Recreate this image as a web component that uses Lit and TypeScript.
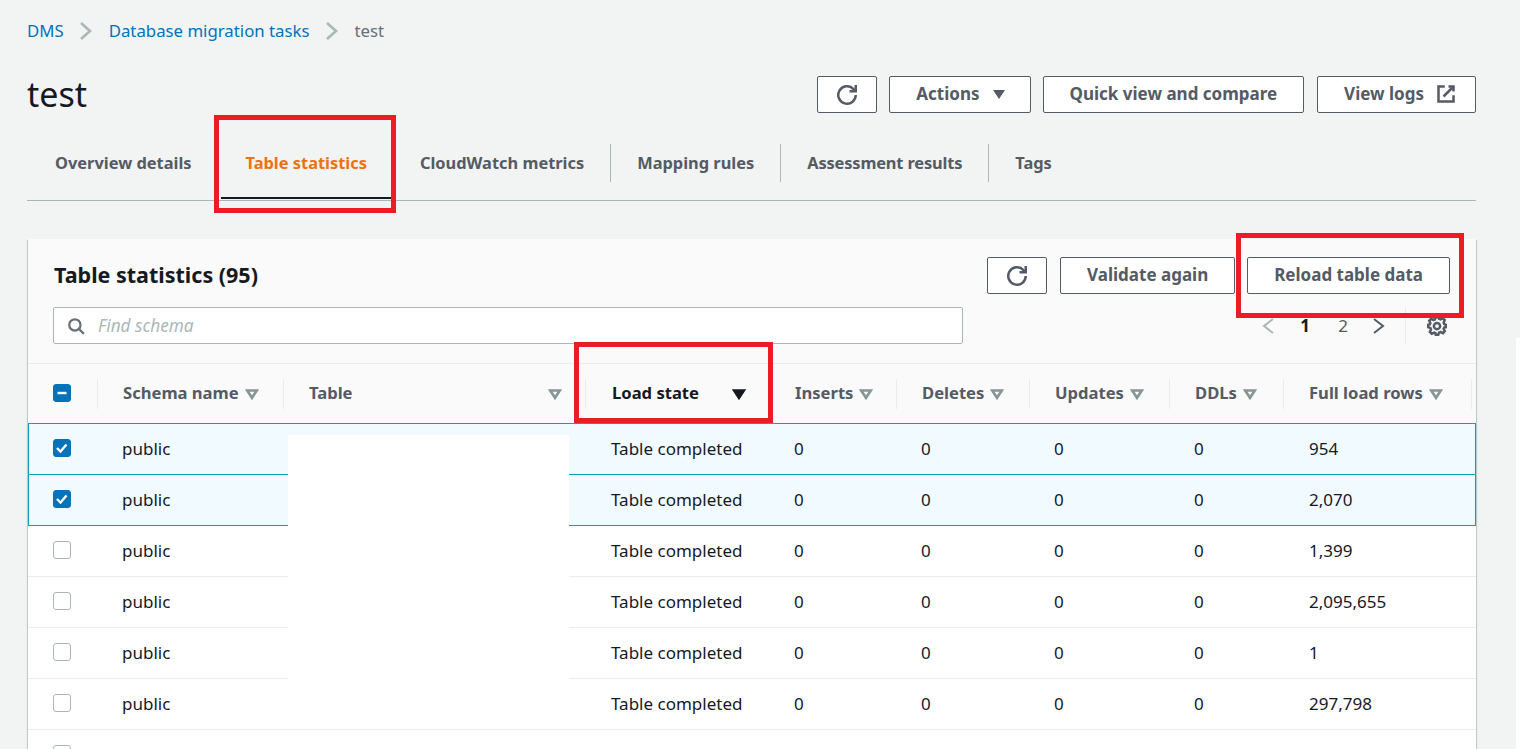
import { LitElement, html, css, svg } from 'lit';
import { customElement } from 'lit/decorators.js';

const rows = [
    { n: '954', on: true },
    { n: '2,070', on: true },
    { n: '1,399', on: false },
    { n: '2,095,655', on: false },
    { n: '1', on: false },
    { n: '297,798', on: false },
    { n: '5,547', on: false },
];

const cols = [
    { label: 'Schema name', caret: true },
    { label: 'Table', caret: true, spread: true },
    { label: 'Load state', sorted: true, spread: true },
    { label: 'Inserts', caret: true },
    { label: 'Deletes', caret: true },
    { label: 'Updates', caret: true },
    { label: 'DDLs', caret: true },
    { label: 'Full load rows', caret: true },
];

const tabs = ['Overview details', 'Table statistics', 'CloudWatch metrics', 'Mapping rules', 'Assessment results', 'Tags'];

const icon = (body: unknown, cls = 'ic') => html`<svg class=${cls} viewBox="0 0 16 16" fill="none" stroke="currentColor" stroke-width="2">${body}</svg>`;
const refresh = () => icon(svg`<path d="M10 5h5V0" /><path d="M15 8a6.99 6.99 0 1 1-2.04-4.95L15 5" />`);
const chevron = (d: string, cls: string) => icon(svg`<path d=${d} />`, cls);
const crumbSep = () => html`<svg class="sep" viewBox="0 0 14 20" fill="none" stroke="currentColor" stroke-width="2.6"><path d="M2 2l9 8-9 8" /></svg>`;

@customElement('app-root')
export class AppRoot extends LitElement {
    static styles = css`
        :host {
            display: block;
            position: relative;
            height: 749px;
            overflow: hidden;
            background: #f2f3f3;
            color: #16191f;
            font-family: "Noto Sans", sans-serif;
            font-size: 17px;
        }
        .page { padding: 19px 44px 0 27px; }
        .crumbs { display: flex; align-items: center; height: 24px; box-sizing: border-box; padding-bottom: 2px; color: #687078; font-size: 16.8px; }
        .crumbs a { color: #0073bb; }
        .sep { width: 14px; height: 20px; margin: 2px 16px 0 15px; color: #aab7b8; }
        .head { display: flex; align-items: center; justify-content: space-between; margin-top: 33px; height: 37px; }
        h1 { margin: 0; font-size: 34px; font-weight: 400; line-height: 37px; }
        .btns { display: flex; gap: 12px; }
        button {
            display: flex;
            align-items: center;
            justify-content: center;
            height: 37px;
            box-sizing: border-box;
            padding: 0 26px 2px;
            background: #fff;
            border: 1px solid #545b64;
            border-radius: 2px;
            color: #545b64;
            font: 700 17px "Noto Sans", sans-serif;
        }
        button.square { width: 60px; padding: 0; }
        button.actions { padding-right: 25px; }
        button.logs { margin-left: 1px; padding-right: 19px; }
        .card button.square { margin-right: 1px; }
        .ic { width: 20px; height: 20px; }
        .tri { width: 0; height: 0; margin: 2px 0 0 13px; border: 6.5px solid transparent; border-top: 9px solid #545b64; border-bottom: 0; }
        .ext { width: 20px; height: 20px; margin: 1px 0 0 12px; }
        .tabs { display: flex; height: 87px; align-items: center; border-bottom: 1px solid #aab7b8; }
        .tab { display: flex; align-items: center; height: 38px; margin-top: 12px; padding: 0 26px; border-right: 1px solid #aab7b8; font-size: 16.4px; font-weight: 700; color: #545b64; white-space: nowrap; }
        .tab:first-child { padding: 0 27px 0 28px; }
        .tab:nth-child(5) { letter-spacing: -0.15px; }
        .tab.plain { border-right-color: transparent; }
        .tab.active { position: relative; color: #ec7211; }
        .tab.active::after { content: ""; position: absolute; left: 1px; right: 1px; top: 53px; height: 2px; background: #16191f; }
        .card { margin: 38px 0 0 1px; background: #fff; box-shadow: 0 1px 1px 0 rgba(0, 28, 36, 0.3), 1px 1px 1px 0 rgba(0, 28, 36, 0.15), -1px 1px 1px 0 rgba(0, 28, 36, 0.15); }
        .card-top { background: #fafafa; border-bottom: 1px solid #eaeded; height: 125px; box-sizing: border-box; padding: 18px 26px 0 25px; }
        .row1 { display: flex; align-items: center; justify-content: space-between; height: 37px; }
        h2 { margin: 0 0 2px 1px; font-size: 21.5px; font-weight: 700; }
        .row2 { display: flex; align-items: center; margin-top: 13px; }
        .find { display: flex; align-items: center; width: 910px; height: 37px; box-sizing: border-box; padding-left: 13px; background: #fff; border: 1px solid #aab7b8; border-radius: 2px; color: #aab7b8; font-size: 17.2px; font-style: italic; }
        .find .ic { width: 18px; height: 18px; margin-right: 13px; color: #687078; }
        .pager { display: flex; align-items: center; margin-left: auto; height: 37px; color: #545b64; }
        .pager .ic { width: 16px; height: 16px; flex: none; }
        .pager b { color: #16191f; width: 38px; text-align: center; }
        .pager span { width: 38px; text-align: center; }
        .pager .off { margin-right: 10px; color: #aab7b8; }
        .pager .next { margin-left: 9px; }
        .gear { margin: 0 3px 0 18px; padding-left: 21px; height: 37px; display: flex; align-items: center; border-left: 1px solid #eaeded; }
        .pager .gear .ic { width: 20px; height: 20px; }
        .grid { display: grid; grid-template-columns: 69px 186px 302px 184px 127px 133px 140px 114px 188px 5px; }
        .thead { height: 59px; background: #fafafa; align-items: center; }
        .th { display: flex; align-items: center; height: 30px; padding: 0 0 2px 25px; box-sizing: border-box; border-left: 1px solid #eaeded; font-size: 16.6px; font-weight: 700; color: #545b64; white-space: nowrap; }
        .th:first-child { border-left: 0; }
        .th.spread { justify-content: space-between; padding-right: 22px; }
        .th.sorted { padding-left: 26px; color: #16191f; }
        .caret { width: 16px; height: 16px; margin: 2px 0 0 5px; color: #879596; }
        .sorted .caret { color: #16191f; }
        .tr { height: 51px; align-items: center; border-top: 1px solid #eaeded; box-sizing: border-box; }
        .tr.on { background: #f1faff; border-top-color: #00a1c9; box-shadow: inset 1px 0 0 #00a1c9, inset -1px 0 0 #00a1c9; }
        .tr.on + .tr { border-top-color: #00a1c9; }
        .td { padding: 0 0 2px 25px; white-space: nowrap; }
        .td:first-child { display: flex; }
        .td:nth-child(4), .td:nth-child(9) { padding-left: 26px; }
        .box { width: 18px; height: 18px; box-sizing: border-box; border: 1px solid #aab7b8; border-radius: 3px; background: #fff; display: block; }
        .box.fill { background: #0073bb; border-color: #0073bb; color: #fff; }
        .box svg { display: block; width: 16px; height: 16px; }
        .mark { position: absolute; box-sizing: border-box; border: 5px solid #ed1c24; }
        .mask { position: absolute; left: 288px; top: 435px; width: 281px; height: 293px; background: #fff; }
        .strip { position: absolute; left: 1516px; top: 338px; width: 4px; bottom: 0; background: #fff; }
    `;

    renderBox(state: 'none' | 'check' | 'dash') {
        if (state === 'none') return html`<span class="box"></span>`;
        const d = state === 'check' ? 'M3 8l3.5 3.5L12.5 4.5' : 'M3.5 8h9';
        return html`<span class="box fill"><svg viewBox="0 0 16 16" fill="none" stroke="currentColor" stroke-width="2.4"><path d=${d} /></svg></span>`;
    }

    render() {
        return html`
            <div class="page">
                <div class="crumbs">
                    <a>DMS</a>${crumbSep()}
                    <a>Database migration tasks</a>${crumbSep()}
                    <span>test</span>
                </div>
                <div class="head">
                    <h1>test</h1>
                    <div class="btns">
                        <button class="square">${refresh()}</button>
                        <button class="actions">Actions<span class="tri"></span></button>
                        <button>Quick view and compare</button>
                        <button class="logs">View logs${icon(svg`<path d="M10 2h4v4" /><path d="M6 10l8-8" /><path d="M14 9.05V14H2V2h5" />`, 'ext')}</button>
                    </div>
                </div>
                <div class="tabs">
                    ${tabs.map((t, i) => html`<div class="tab ${i === 1 ? 'active' : ''} ${i < 2 || i === 5 ? 'plain' : ''}">${t}</div>`)}
                </div>
                <div class="card">
                    <div class="card-top">
                        <div class="row1">
                            <h2>Table statistics (95)</h2>
                            <div class="btns">
                                <button class="square">${refresh()}</button>
                                <button>Validate again</button>
                                <button>Reload table data</button>
                            </div>
                        </div>
                        <div class="row2">
                            <div class="find">
                                ${icon(svg`<circle cx="7" cy="7" r="5" /><path d="M15 15l-4.5-4.5" />`)}
                                Find schema
                            </div>
                            <div class="pager">
                                ${chevron('M13 1L4 8l9 7', 'ic off')}
                                <b>1</b><span>2</span>
                                ${chevron('M3 1l9 7-9 7', 'ic next')}
                                <div class="gear">
                                    ${icon(svg`<path d="M13.3 5.2l.9-1.9-1.5-1.5-1.9.9a5 5 0 0 0-1.1-.45L9 1H7l-.7 1.75a5 5 0 0 0-1.1.45l-1.9-.9-1.5 1.5.9 1.9a5 5 0 0 0-.45 1.1L1 7v2l1.75.7c.1.4.25.75.45 1.1l-.9 1.9 1.5 1.5 1.9-.9c.35.2.7.35 1.1.45L7 15h2l.7-1.75c.4-.1.75-.25 1.1-.45l1.9.9 1.5-1.5-.9-1.9c.2-.35.35-.7.45-1.1L15 9V7l-1.3-.7a5 5 0 0 0-.4-1.1z" /><circle cx="8" cy="8" r="2.5" />`)}
                                </div>
                            </div>
                        </div>
                    </div>
                    <div class="grid thead">
                        <div class="th">${this.renderBox('dash')}</div>
                        ${cols.map(c => html`
                            <div class="th ${c.spread ? 'spread' : ''} ${c.sorted ? 'sorted' : ''}">
                                ${c.label}
                                <svg class="caret" viewBox="0 0 16 16" fill=${c.sorted ? 'currentColor' : 'none'} stroke="currentColor" stroke-width="2.6"><path d="M3.2 4.5h9.6L8 11.8z" /></svg>
                            </div>`)}
                        <div class="th"></div>
                    </div>
                    ${rows.map(r => html`
                        <div class="grid tr ${r.on ? 'on' : ''}">
                            <div class="td">${this.renderBox(r.on ? 'check' : 'none')}</div>
                            <div class="td">public</div>
                            <div class="td"></div>
                            <div class="td">Table completed</div>
                            <div class="td">0</div>
                            <div class="td">0</div>
                            <div class="td">0</div>
                            <div class="td">0</div>
                            <div class="td">${r.n}</div>
                            <div class="td"></div>
                        </div>`)}
                </div>
            </div>
            <div class="mask"></div>
            <div class="strip"></div>
            <div class="mark" style="left:214px;top:115px;width:182px;height:98px"></div>
            <div class="mark" style="left:1236px;top:233px;width:228px;height:85px"></div>
            <div class="mark" style="left:574px;top:342px;width:199px;height:81px"></div>
        `;
    }
}
